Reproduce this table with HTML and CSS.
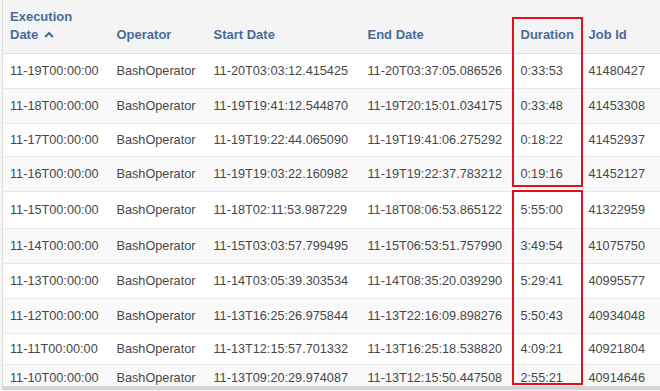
FILE: index.html
```html
<!DOCTYPE html>
<html>
<head>
<meta charset="utf-8">
<link rel="stylesheet" href="styles.css">
</head>
<body>
<div class="wrap">
<table class="grid">
<colgroup>
<col class="c1"><col class="c2"><col class="c3"><col class="c4"><col class="c5"><col class="c6">
</colgroup>
<thead>
<tr>
<th>Execution<br>Date <svg class="chev" width="10" height="7" viewBox="0 0 10 7"><polyline points="1.2,6 5,2 8.8,6" fill="none" stroke="#4a6a99" stroke-width="2.2"/></svg></th>
<th>Operator</th>
<th>Start Date</th>
<th>End Date</th>
<th>Duration</th>
<th>Job Id</th>
</tr>
</thead>
<tbody>
<tr class="r1"><td>11-19T00:00:00</td><td>BashOperator</td><td>11-20T03:03:12.415425</td><td>11-20T03:37:05.086526</td><td>0:33:53</td><td>41480427</td></tr>
<tr class="r2"><td>11-18T00:00:00</td><td>BashOperator</td><td>11-19T19:41:12.544870</td><td>11-19T20:15:01.034175</td><td>0:33:48</td><td>41453308</td></tr>
<tr class="r3"><td>11-17T00:00:00</td><td>BashOperator</td><td>11-19T19:22:44.065090</td><td>11-19T19:41:06.275292</td><td>0:18:22</td><td>41452937</td></tr>
<tr class="r4"><td>11-16T00:00:00</td><td>BashOperator</td><td>11-19T19:03:22.160982</td><td>11-19T19:22:37.783212</td><td>0:19:16</td><td>41452127</td></tr>
<tr class="r5"><td>11-15T00:00:00</td><td>BashOperator</td><td>11-18T02:11:53.987229</td><td>11-18T08:06:53.865122</td><td>5:55:00</td><td>41322959</td></tr>
<tr class="r6"><td>11-14T00:00:00</td><td>BashOperator</td><td>11-15T03:03:57.799495</td><td>11-15T06:53:51.757990</td><td>3:49:54</td><td>41075750</td></tr>
<tr class="r7"><td>11-13T00:00:00</td><td>BashOperator</td><td>11-14T03:05:39.303534</td><td>11-14T08:35:20.039290</td><td>5:29:41</td><td>40995577</td></tr>
<tr class="r8"><td>11-12T00:00:00</td><td>BashOperator</td><td>11-13T16:25:26.975844</td><td>11-13T22:16:09.898276</td><td>5:50:43</td><td>40934048</td></tr>
<tr class="r9"><td>11-11T00:00:00</td><td>BashOperator</td><td>11-13T12:15:57.701332</td><td>11-13T16:25:18.538820</td><td>4:09:21</td><td>40921804</td></tr>
<tr class="r10"><td>11-10T00:00:00</td><td>BashOperator</td><td>11-13T09:20:29.974087</td><td>11-13T12:15:50.447508</td><td>2:55:21</td><td>40914646</td></tr>
</tbody>
</table>
<div class="mark mark-a"></div>
<div class="mark mark-b"></div>
</div>
</body>
</html>
```
FILE: styles.css
```css
html, body {
  margin: 0;
  padding: 0;
  background: #f4f4f4;
}
body {
  width: 660px;
  height: 391px;
  overflow: hidden;
  font-family: "Liberation Sans", Arial, sans-serif;
  font-size: 12.7px;
}
.wrap {
  position: relative;
  padding-left: 2px;
}
.grid {
  border-collapse: collapse;
  table-layout: fixed;
  width: 658px;
  border-left: 1px solid #dcdcdc;
}
.c1 { width: 107px; }
.c2 { width: 97px; }
.c3 { width: 154px; }
.c4 { width: 153px; }
.c5 { width: 68px; }
.c6 { width: 79px; }
th {
  text-align: left;
  vertical-align: bottom;
  color: #4a6a99;
  font-weight: bold;
  font-size: 13px;
  line-height: 18px;
  padding: 8px 0 9px 7px;
  height: 35px;
  background: #f4f4f4;
  border-bottom: 1px solid #dedede;
  white-space: nowrap;
}
.chev { vertical-align: 1px; margin-left: 2px; }
td {
  color: #474747;
  padding: 0 0 0 7px;
  white-space: nowrap;
  border-bottom: 1px solid #e8e8e8;
  background: #ffffff;
}
tbody tr:nth-child(even) td { background: #f9f9f9; }
.r1 td { height: 34px; }
.r2 td { height: 34px; }
.r3 td { height: 32px; }
.r4 td { height: 34px; }
.r5 td { height: 36px; }
.r6 td { height: 34px; }
.r7 td { height: 34px; }
.r8 td { height: 34px; }
.r9 td { height: 30px; }
.r10 td { height: 17px; padding-top: 4px; border-bottom: 4px solid #d6d6d6; }
.mark {
  position: absolute;
  left: 512px;
  width: 67px;
  border: 2px solid #e3101c;
}
.mark-a { top: 17px; height: 166px; }
.mark-b { top: 190px; height: 191px; }
```
